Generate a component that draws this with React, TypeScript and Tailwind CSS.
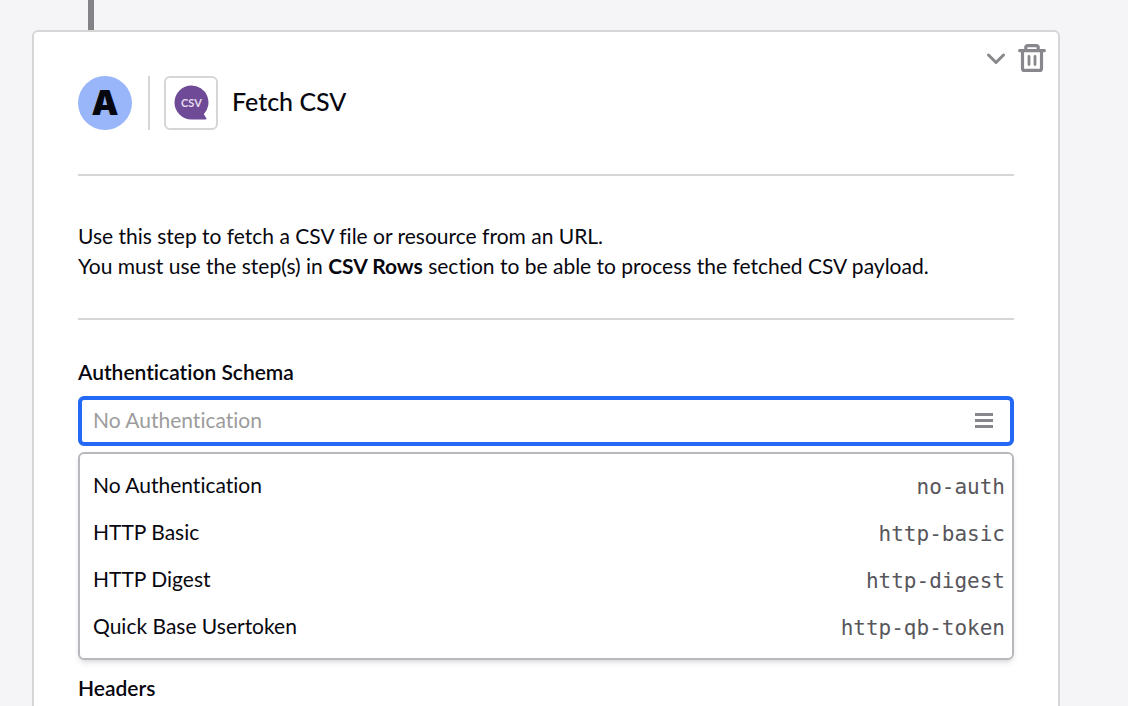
import { useState } from "react";

const schemas = [
  { label: "No Authentication", value: "no-auth" },
  { label: "HTTP Basic", value: "http-basic" },
  { label: "HTTP Digest", value: "http-digest" },
  { label: "Quick Base Usertoken", value: "http-qb-token" },
];

function ChevronIcon() {
  return (
    <svg width="20" height="28" viewBox="0 0 20 28" fill="none" stroke="#88878c" strokeWidth="3" strokeLinecap="round" strokeLinejoin="round">
      <path d="M2.5 11l7.5 7.5 7.5-7.5" />
    </svg>
  );
}

function TrashIcon() {
  return (
    <svg width="28" height="28" viewBox="0 0 28 28" fill="none" stroke="#88878c" strokeWidth="3.2" strokeLinecap="round" strokeLinejoin="round">
      <path d="M1.6 6.6h24.800" />
      <path d="M7.800 6V3.600a2 2 0 0 1 2-2h8.400a2 2 0 0 1 2 2V6" />
      <path d="M4.500 7v17.400a2 2 0 0 0 2 2h15a2 2 0 0 0 2-2V7" />
      <path d="M11 12.500v8M17 12.500v8" strokeWidth="2.800" />
    </svg>
  );
}

function CsvLogo() {
  return (
    <svg width="36" height="36" viewBox="0 0 36 36" role="img" aria-label="CSV">
      <path d="M18.5 .5a17 17 0 1 0 0 34H32.500c1 0 1.200-1 .6-1.700L30.800 29.200A17 17 0 0 0 18.500 .5z" fill="#6f4a97" />
      <text x="18.5" y="21.5" textAnchor="middle" fontSize="11" fontWeight="700" fill="#e4dcee" fontFamily="Lato, sans-serif">
        CSV
      </text>
    </svg>
  );
}

export default function App() {
  const [query, setQuery] = useState("");

  return (
    <div className="min-h-screen overflow-hidden bg-[#f5f5f8] pl-8 pr-17 font-['Lato','Noto_Sans',sans-serif] text-[21px] leading-[30px] text-[#07070f] [font-variant-ligatures:none]">
      <div className="ml-14 h-[30px] w-1.5 bg-[#838286]" />

      <section className="rounded-md border-2 border-[#d6d6d6] bg-white pb-4">
        <div className="flex h-11 items-end justify-end gap-3 pb-1 pr-3">
          <button type="button" aria-label="Collapse step">
            <ChevronIcon />
          </button>
          <button type="button" aria-label="Delete step">
            <TrashIcon />
          </button>
        </div>

        <div className="px-11">
          <header className="flex items-center border-b-2 border-[#d6d6d6] pb-11">
            <div className="flex size-[54px] items-center justify-center rounded-full bg-[#9ab6fa] font-['Inter',sans-serif] text-[34px] font-black">
              A
            </div>
            <div className="ml-4 h-[54px] w-0.5 bg-[#d6d6d6]" />
            <div className="ml-3.5 flex size-[54px] items-center justify-center rounded-md border-2 border-[#d6d6d6]">
              <CsvLogo />
            </div>
            <h2 className="ml-3.5 pb-1 text-[25px] font-medium">Fetch CSV</h2>
          </header>

          <p className="border-b-2 border-[#d6d6d6] pb-[37px] pt-[45px]">
            Use this step to fetch a CSV file or resource from an URL.
            <br />
            You must use the step(s) in <strong className="font-bold">CSV Rows</strong> section to be able to process the fetched CSV payload.
          </p>

          <label htmlFor="auth-schema" className="mt-[37px] block font-semibold">
            Authentication Schema
          </label>
          <div className="mt-[9px] flex h-[50px] items-center rounded-md border-4 border-[#2468f6] pl-[11px] pr-[17px]">
            <input
              id="auth-schema"
              type="text"
              role="combobox"
              aria-expanded="true"
              aria-controls="auth-options"
              placeholder="No Authentication"
              value={query}
              onChange={(e) => setQuery(e.target.value)}
              className="min-w-0 flex-1 bg-transparent pb-0.5 outline-none placeholder:text-[#9c9c9c]"
            />
            <button type="button" aria-label="Toggle options">
              <svg width="18" height="16" viewBox="0 0 18 16" fill="#88878c">
                <rect y="0" width="18" height="3" />
                <rect y="6" width="18" height="3" />
                <rect y="12" width="18" height="3" />
              </svg>
            </button>
          </div>

          <ul id="auth-options" role="listbox" className="mt-1.5 rounded-md border-2 border-[#b9b8be] pb-[9px] pt-[7px] shadow-md">
            {schemas.map((schema) => (
              <li key={schema.value} role="option" aria-selected="false" className="flex h-[47px] items-center justify-between pl-[13px] pr-[7px]">
                <span>{schema.label}</span>
                <code className="pt-1 font-['DejaVu_Sans_Mono',monospace] text-[21px] text-[#57565b]">{schema.value}</code>
              </li>
            ))}
          </ul>

          <h3 className="mt-[13px] font-semibold">Headers</h3>
        </div>
      </section>
    </div>
  );
}
